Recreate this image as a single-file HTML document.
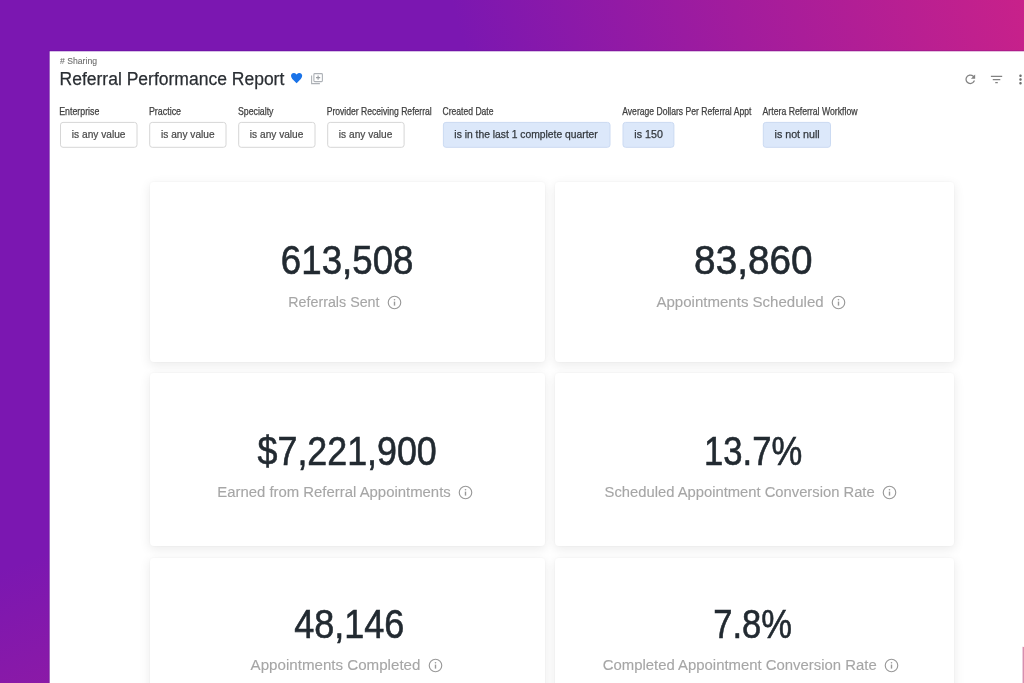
<!DOCTYPE html>
<html lang="en">
<head>
<meta charset="utf-8">
<title>Referral Performance Report</title>
<style>
html,body{margin:0;padding:0;}
html{overflow:hidden;}
body{width:1024px;height:683px;overflow:hidden;position:relative;font-family:"Liberation Sans",Arial,sans-serif;background:#7b17b1;}
.bg{position:absolute;left:0;top:0;width:1024px;height:683px;
background:linear-gradient(160deg,rgba(152,28,158,0) 54%,rgba(152,28,158,0.5) 65.6%),linear-gradient(74deg,#7b17b1 0%,#7b17b1 53%,#a21c9d 76%,#c8218a 100%);}
.layer{position:absolute;left:0;top:0;width:1024px;height:683px;will-change:transform;}
.t{position:absolute;left:0;top:0;white-space:nowrap;line-height:1;font-weight:400;display:block;transform-origin:0 0;margin:0;padding:0;}
.card{position:absolute;background:#fff;border-radius:4px;box-shadow:0 3px 11px 1px rgba(0,0,0,0.075), 0 0 3px rgba(0,0,0,0.05);}
svg{position:absolute;overflow:visible;}
</style>
</head>
<body>
<div class="bg"></div>
<svg style="left:0;top:0" width="1024" height="683" viewBox="0 0 1024 683"><rect x="48.9" y="50.5" width="980" height="640" fill="rgba(70,10,130,0.3)"/><rect x="49.64" y="51.27" width="980" height="640" fill="#fff"/></svg>
<div class="layer">

<div class="card" style="left:150px;top:182px;width:395.0px;height:180.0px"></div>
<div class="card" style="left:555px;top:182px;width:399.0px;height:180.0px"></div>
<div class="card" style="left:150px;top:373px;width:395.0px;height:173.0px"></div>
<div class="card" style="left:555px;top:373px;width:399.0px;height:173.0px"></div>
<div class="card" style="left:150px;top:558px;width:395.0px;height:142.0px"></div>
<div class="card" style="left:555px;top:558px;width:399.0px;height:142.0px"></div>
<svg style="left:0;top:0" width="1024" height="200" viewBox="0 0 1024 200">
<rect x="60.5" y="122.4" width="76.5" height="24.9" rx="2.5" fill="#ffffff" stroke="#d6d6d6" stroke-width="1"/>
<rect x="149.7" y="122.4" width="76.3" height="24.9" rx="2.5" fill="#ffffff" stroke="#d6d6d6" stroke-width="1"/>
<rect x="238.7" y="122.4" width="76.3" height="24.9" rx="2.5" fill="#ffffff" stroke="#d6d6d6" stroke-width="1"/>
<rect x="327.7" y="122.4" width="76.4" height="24.9" rx="2.5" fill="#ffffff" stroke="#d6d6d6" stroke-width="1"/>
<rect x="443.4" y="122.4" width="166.6" height="24.9" rx="2.5" fill="#dce8fa" stroke="#cbdaf2" stroke-width="1"/>
<rect x="623.0" y="122.4" width="50.9" height="24.9" rx="2.5" fill="#dce8fa" stroke="#cbdaf2" stroke-width="1"/>
<rect x="763.3" y="122.4" width="67.2" height="24.9" rx="2.5" fill="#dce8fa" stroke="#cbdaf2" stroke-width="1"/>
</svg>
<div class="t" style="font-size:9.8px;color:#6c6c6c;-webkit-text-stroke:0.1px #6c6c6c;transform:translate(60.07px,56.30px) scaleX(0.8809)"># Sharing</div>
<h1 class="t" style="font-size:18px;color:#2a2e33;-webkit-text-stroke:0.25px #2a2e33;transform:translate(59.51px,69.66px) scaleX(0.9728)">Referral Performance Report</h1>
<div class="t" style="font-size:10.2px;color:#3f3f3f;-webkit-text-stroke:0.25px #3f3f3f;transform:translate(59.21px,107.37px) scaleX(0.8639)">Enterprise</div>
<div class="t" style="font-size:10.2px;color:#3f3f3f;-webkit-text-stroke:0.25px #3f3f3f;transform:translate(148.90px,107.37px) scaleX(0.8728)">Practice</div>
<div class="t" style="font-size:10.2px;color:#3f3f3f;-webkit-text-stroke:0.25px #3f3f3f;transform:translate(237.92px,107.37px) scaleX(0.8604)">Specialty</div>
<div class="t" style="font-size:10.2px;color:#3f3f3f;-webkit-text-stroke:0.25px #3f3f3f;transform:translate(326.67px,107.37px) scaleX(0.8434)">Provider Receiving Referral</div>
<div class="t" style="font-size:10.2px;color:#3f3f3f;-webkit-text-stroke:0.25px #3f3f3f;transform:translate(442.54px,107.37px) scaleX(0.8405)">Created Date</div>
<div class="t" style="font-size:10.2px;color:#3f3f3f;-webkit-text-stroke:0.25px #3f3f3f;transform:translate(622.25px,107.37px) scaleX(0.8422)">Average Dollars Per Referral Appt</div>
<div class="t" style="font-size:10.2px;color:#3f3f3f;-webkit-text-stroke:0.25px #3f3f3f;transform:translate(762.56px,107.37px) scaleX(0.8527)">Artera Referral Workflow</div>
<div class="t" style="font-size:10.4px;color:#484848;-webkit-text-stroke:0.2px #484848;transform:translate(71.85px,129.50px) scaleX(0.9782)">is any value</div>
<div class="t" style="font-size:10.4px;color:#484848;-webkit-text-stroke:0.2px #484848;transform:translate(161.07px,129.50px) scaleX(0.9749)">is any value</div>
<div class="t" style="font-size:10.4px;color:#484848;-webkit-text-stroke:0.2px #484848;transform:translate(249.87px,129.50px) scaleX(0.9750)">is any value</div>
<div class="t" style="font-size:10.4px;color:#484848;-webkit-text-stroke:0.2px #484848;transform:translate(338.87px,129.50px) scaleX(0.9750)">is any value</div>
<div class="t" style="font-size:10.4px;color:#33383d;-webkit-text-stroke:0.25px #33383d;transform:translate(454.37px,129.50px) scaleX(0.9932)">is in the last 1 complete quarter</div>
<div class="t" style="font-size:10.4px;color:#33383d;-webkit-text-stroke:0.25px #33383d;transform:translate(634.35px,129.50px) scaleX(1.0267)">is 150</div>
<div class="t" style="font-size:10.4px;color:#33383d;-webkit-text-stroke:0.25px #33383d;transform:translate(774.50px,129.50px) scaleX(1.0307)">is not null</div>
<div class="t" style="font-size:40.3px;color:#222a31;-webkit-text-stroke:0.6px #222a31;transform:translate(280.84px,241.19px) scaleX(0.9105)">613,508</div>
<div class="t" style="font-size:15.2px;color:#a6a6a6;-webkit-text-stroke:0.12px #a6a6a6;transform:translate(288.32px,293.83px) scaleX(0.9390)">Referrals Sent</div>
<div class="t" style="font-size:40.3px;color:#222a31;-webkit-text-stroke:0.6px #222a31;transform:translate(694.12px,241.19px) scaleX(0.9613)">83,860</div>
<div class="t" style="font-size:15.2px;color:#a6a6a6;-webkit-text-stroke:0.12px #a6a6a6;transform:translate(656.49px,293.83px) scaleX(0.9896)">Appointments Scheduled</div>
<div class="t" style="font-size:40.3px;color:#222a31;-webkit-text-stroke:0.6px #222a31;transform:translate(257.55px,431.69px) scaleX(0.8886)">$7,221,900</div>
<div class="t" style="font-size:15.2px;color:#a6a6a6;-webkit-text-stroke:0.12px #a6a6a6;transform:translate(217.19px,484.13px) scaleX(0.9811)">Earned from Referral Appointments</div>
<div class="t" style="font-size:40.3px;color:#222a31;-webkit-text-stroke:0.6px #222a31;transform:translate(704.01px,431.69px) scaleX(0.8591)">13.7%</div>
<div class="t" style="font-size:15.2px;color:#a6a6a6;-webkit-text-stroke:0.12px #a6a6a6;transform:translate(604.57px,484.13px) scaleX(0.9724)">Scheduled Appointment Conversion Rate</div>
<div class="t" style="font-size:40.3px;color:#222a31;-webkit-text-stroke:0.6px #222a31;transform:translate(294.14px,604.69px) scaleX(0.8945)">48,146</div>
<div class="t" style="font-size:15.2px;color:#a6a6a6;-webkit-text-stroke:0.12px #a6a6a6;transform:translate(250.62px,657.23px) scaleX(0.9956)">Appointments Completed</div>
<div class="t" style="font-size:40.3px;color:#222a31;-webkit-text-stroke:0.6px #222a31;transform:translate(713.18px,604.69px) scaleX(0.8574)">7.8%</div>
<div class="t" style="font-size:15.2px;color:#a6a6a6;-webkit-text-stroke:0.12px #a6a6a6;transform:translate(602.81px,657.23px) scaleX(0.9800)">Completed Appointment Conversion Rate</div>
<svg style="left:290.9px;top:73.0px" width="11.2" height="10.2" viewBox="0 0 24 21" preserveAspectRatio="none"><path fill="#1a73e8" d="M12 21 L10.3 19.5 C4.2 14.1 0 10.4 0 5.9 C0 2.4 2.7 0 6 0 C8 0 10 1 12 3 C14 1 16 0 18 0 C21.3 0 24 2.4 24 5.9 C24 10.4 19.8 14.1 13.7 19.5 Z"/></svg>
<svg style="left:311.0px;top:72.8px" width="12" height="11.2" viewBox="0 0 12 11.2" fill="none" stroke="#adb1b6" stroke-width="1.1"><rect x="2.9" y="0.6" width="8.5" height="8.0" rx="0.9"/><path d="M0.6 2.6 V10.6 H8.9"/><path d="M7.1 2.5 V6.7 M5.0 4.6 H9.2" stroke="#999da2"/></svg>
<svg style="left:963.4px;top:71.95px" width="14.6" height="14.6" viewBox="0 0 24 24"><path fill="#828282" d="M17.65 6.35A7.958 7.958 0 0 0 12 4c-4.42 0-7.99 3.58-7.99 8s3.57 8 7.99 8c3.73 0 6.84-2.55 7.73-6h-2.08A5.99 5.99 0 0 1 12 18c-3.31 0-6-2.69-6-6s2.69-6 6-6c1.66 0 3.14.69 4.22 1.78L13 11h7V4l-2.35 2.35z"/></svg>
<svg style="left:989.0px;top:72.0px" width="15.07" height="15.07" viewBox="0 0 24 24"><path fill="#828282" d="M10 18h4v-2h-4v2zM3 6v2h18V6H3zm3 7h12v-2H6v2z"/></svg>
<svg style="left:1012.6px;top:71.9px" width="15" height="15" viewBox="0 0 24 24"><path fill="#6e6e6e" d="M12 8c1.1 0 2-.9 2-2s-.9-2-2-2-2 .9-2 2 .9 2 2 2zm0 2c-1.1 0-2 .9-2 2s.9 2 2 2 2-.9 2-2-.9-2-2-2zm0 6c-1.1 0-2 .9-2 2s.9 2 2 2 2-.9 2-2-.9-2-2-2z"/></svg>
<svg style="left:386.6px;top:294.6px" width="15" height="15" viewBox="0 0 15 15" fill="none" stroke="#999999" stroke-width="1.15"><circle cx="7.5" cy="7.5" r="6.25"/><path d="M7.5 6.6 V10.6" stroke-width="1.4"/><circle cx="7.5" cy="4.8" r="0.8" fill="#999999" stroke="none"/></svg>
<svg style="left:830.7px;top:294.5px" width="15" height="15" viewBox="0 0 15 15" fill="none" stroke="#999999" stroke-width="1.15"><circle cx="7.5" cy="7.5" r="6.25"/><path d="M7.5 6.6 V10.6" stroke-width="1.4"/><circle cx="7.5" cy="4.8" r="0.8" fill="#999999" stroke="none"/></svg>
<svg style="left:458.1px;top:484.9px" width="15" height="15" viewBox="0 0 15 15" fill="none" stroke="#999999" stroke-width="1.15"><circle cx="7.5" cy="7.5" r="6.25"/><path d="M7.5 6.6 V10.6" stroke-width="1.4"/><circle cx="7.5" cy="4.8" r="0.8" fill="#999999" stroke="none"/></svg>
<svg style="left:881.5px;top:484.9px" width="15" height="15" viewBox="0 0 15 15" fill="none" stroke="#999999" stroke-width="1.15"><circle cx="7.5" cy="7.5" r="6.25"/><path d="M7.5 6.6 V10.6" stroke-width="1.4"/><circle cx="7.5" cy="4.8" r="0.8" fill="#999999" stroke="none"/></svg>
<svg style="left:427.7px;top:657.9px" width="15" height="15" viewBox="0 0 15 15" fill="none" stroke="#999999" stroke-width="1.15"><circle cx="7.5" cy="7.5" r="6.25"/><path d="M7.5 6.6 V10.6" stroke-width="1.4"/><circle cx="7.5" cy="4.8" r="0.8" fill="#999999" stroke="none"/></svg>
<svg style="left:883.5px;top:657.9px" width="15" height="15" viewBox="0 0 15 15" fill="none" stroke="#999999" stroke-width="1.15"><circle cx="7.5" cy="7.5" r="6.25"/><path d="M7.5 6.6 V10.6" stroke-width="1.4"/><circle cx="7.5" cy="4.8" r="0.8" fill="#999999" stroke="none"/></svg>
<svg style="left:0;top:0" width="1024" height="683" viewBox="0 0 1024 683"><rect x="1022.1" y="646.6" width="2" height="40" fill="#f7dde8"/><rect x="1022.75" y="647" width="1.5" height="40" fill="#d88fb0"/></svg>
</div>
</body>
</html>
